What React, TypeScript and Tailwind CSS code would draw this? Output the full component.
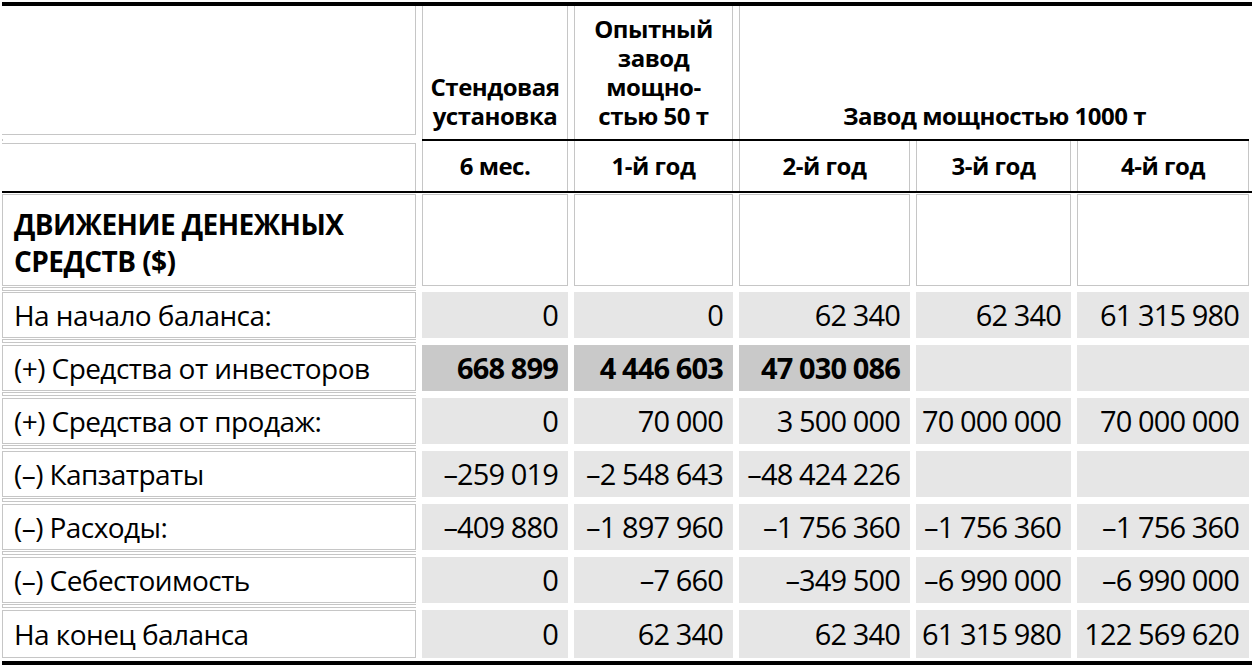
const cols = "grid grid-cols-[414px_146px_159px_171px_155px_172px] gap-x-[6px]";

type Row = { label: string; values: string[]; bold?: boolean };

const rows: Row[] = [
  { label: "На начало баланса:", values: ["0", "0", "62 340", "62 340", "61 315 980"] },
  { label: "(+) Средства от инвесторов", values: ["668 899", "4 446 603", "47 030 086", "", ""], bold: true },
  { label: "(+) Средства от продаж:", values: ["0", "70 000", "3 500 000", "70 000 000", "70 000 000"] },
  { label: "(–) Капзатраты", values: ["–259 019", "–2 548 643", "–48 424 226", "", ""] },
  { label: "(–) Расходы:", values: ["–409 880", "–1 897 960", "–1 756 360", "–1 756 360", "–1 756 360"] },
  { label: "(–) Себестоимость", values: ["0", "–7 660", "–349 500", "–6 990 000", "–6 990 000"] },
  { label: "На конец баланса", values: ["0", "62 340", "62 340", "61 315 980", "122 569 620"] },
];

function Sliver() {
  return <div className="mt-[1px] h-[4px] border-y border-l border-[#c6c6c6]" />;
}

function DataRow({ row, last }: { row: Row; last: boolean }) {
  const h = last ? "h-[48px]" : "h-[46px]";
  return (
    <div className={`${cols} ${last ? "" : "h-[53px]"}`}>
      <div className="flex flex-col">
        <div
          className={`${h} flex items-center whitespace-nowrap border border-[#c6c6c6] pl-[11px] text-[28px] tracking-[-0.02em]`}
        >
          {row.label}
        </div>
        {!last && <Sliver />}
      </div>
      {row.values.map((v, i) => {
        const dark = row.bold && v !== "";
        return (
          <div
            key={i}
            className={`${h} flex items-center justify-end whitespace-nowrap pr-[10px] text-[29px] tracking-[-0.03em] ${
              dark ? "bg-[#c9c9c9] font-bold" : "bg-[#e6e6e6]"
            }`}
          >
            {v}
          </div>
        );
      })}
    </div>
  );
}

export default function App() {
  return (
    <div className="w-[1254px] h-[668px] bg-white pt-[2px] pl-[2px] text-black font-['Open_Sans',sans-serif]">
      <div className="w-[1250px]">
        {/* top rule */}
        <div className="h-[4px] bg-black" />

        {/* header row 1 */}
        <div className={`${cols} h-[133px] text-[24px] font-bold leading-[29px] tracking-[-0.02em]`}>
          <div className="h-[129px] border-r border-b border-[#c6c6c6]" />
          <div className="flex items-end justify-center border-x border-[#c6c6c6] pb-[9px] text-center">
            Стендовая
            <br />
            установка
          </div>
          <div className="flex items-end justify-center border-x border-[#c6c6c6] pb-[9px] text-center">
            <span>
              Опытный
              <br />
              завод
              <br />
              мощно-
              <br />
              стью 50 т
            </span>
          </div>
          <div className="col-span-3 flex items-end justify-center border-l border-[#c6c6c6] pb-[9px]">
            Завод мощностью 1000 т
          </div>
        </div>

        {/* rule under header 1 */}
        <div className={`${cols} h-[2px]`}>
          <div className="border-l border-[#c6c6c6]" />
          <div className="col-span-5 h-[2px] bg-black" />
        </div>

        {/* header row 2 */}
        <div className={`${cols} h-[50px] text-[24px] font-bold tracking-[-0.02em]`}>
          <div className="mt-[2px] border-t border-r border-[#c6c6c6]" />
          {["6 мес.", "1-й год", "2-й год", "3-й год", "4-й год"].map((t) => (
            <div key={t} className="flex items-center justify-center border-x border-[#c6c6c6]">
              {t}
            </div>
          ))}
        </div>

        {/* rule under header 2 */}
        <div className="h-[2px] bg-black" />

        {/* section row */}
        <div className={`${cols} mt-[1px] h-[98px]`}>
          <div className="flex flex-col">
            <div className="h-[92px] border border-[#c6c6c6] pl-[11px] pt-[11px] text-[28px] font-bold leading-[37px] tracking-[-0.02em]">
              ДВИЖЕНИЕ ДЕНЕЖНЫХ
              <br />
              СРЕДСТВ ($)
            </div>
            <Sliver />
          </div>
          {[0, 1, 2, 3, 4].map((i) => (
            <div key={i} className="h-[92px] border border-[#c6c6c6]" />
          ))}
        </div>

        {/* data rows */}
        {rows.map((r, i) => (
          <DataRow key={r.label} row={r} last={i === rows.length - 1} />
        ))}

        {/* bottom rule */}
        <div className="mt-[3px] h-[4px] bg-black" />
      </div>
    </div>
  );
}
